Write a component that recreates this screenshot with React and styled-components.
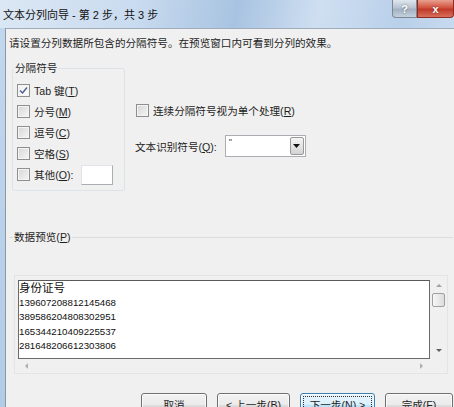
import React from 'react';
import styled, { createGlobalStyle } from 'styled-components';

const GlobalStyle = createGlobalStyle`
  html, body { margin: 0; padding: 0; background: #f0f0f0; overflow: hidden; }
  body {
    font-family: "Liberation Sans", "Noto Sans CJK SC", sans-serif;
    font-size: 10.6px;
    color: #1e1e1e;
  }
`;

const Window = styled.div`
  width: 454px;
  height: 407px;
  overflow: hidden;
  display: flex;
  flex-direction: column;
  background: linear-gradient(180deg, #c3d8ee 0%, #b2cbe7 100%);
`;

const TitleBar = styled.div`
  height: 28px;
  flex: none;
  display: flex;
  align-items: flex-start;
  background: linear-gradient(100deg, #dbe7f4 0%, #c9dbef 30%, #a8c3e1 52%, #cfdff1 70%, #b9d0ea 88%, #c7daef 100%);
`;

const Title = styled.div`
  flex: 1;
  padding: 7px 0 0 3px;
  line-height: 16px;
  font-size: 11px;
  color: #111;
`;

const CaptionButton = styled.div`
  height: 18px;
  width: ${p => p.$w}px;
  display: flex;
  align-items: center;
  justify-content: center;
  color: #fff;
  font-weight: bold;
  font-size: 11px;
  box-sizing: border-box;
  border: 1px solid ${p => (p.$close ? '#8d2a22' : '#7d8793')};
  border-top: none;
  border-radius: ${p => (p.$close ? '0 0 4px 0' : '0 0 0 4px')};
  background: ${p =>
    p.$close
      ? 'linear-gradient(180deg, #e8a090 0%, #d2533f 45%, #c0392b 55%, #d8705a 100%)'
      : 'linear-gradient(180deg, #dfe6ee 0%, #b8c4d2 45%, #a3b1c1 55%, #c4d1de 100%)'};
  text-shadow: 0 0 2px rgba(0, 0, 0, 0.5);
`;

const Body = styled.div`
  flex: 1;
  margin-left: 5px;
  border-top: 1px solid #9eacbc;
  border-left: 1px solid #8c98a6;
  background: #f0f0f0;
  padding: 0 1px 0 3px;
  display: flex;
  flex-direction: column;
`;

const Instruction = styled.div`
  margin-top: 6px;
  line-height: 16px;
  white-space: nowrap;
`;

const OptionsRow = styled.div`
  margin-top: 9px;
  display: flex;
  align-items: flex-start;
`;

const GroupBox = styled.fieldset`
  margin: 0 0 0 3px;
  width: 113px;
  box-sizing: border-box;
  border: 1px solid #dde2e7;
  border-radius: 3px;
  padding: 4px 0 5px 1px;
  min-inline-size: 0;
`;

const Legend = styled.legend`
  padding: 0 1px;
  line-height: 16px;
  color: #1e1e1e;
`;

const CheckRow = styled.div`
  height: 21px;
  display: flex;
  align-items: center;
  gap: 4px;
  padding-left: 3px;
  white-space: nowrap;
`;

const Box = styled.span`
  width: 13px;
  height: 13px;
  flex: none;
  box-sizing: border-box;
  border: 1px solid #8e8f8f;
  display: flex;
  align-items: center;
  justify-content: center;
  background: ${p =>
    p.$checked
      ? 'linear-gradient(135deg, #f0f0f0, #fdfdfd)'
      : 'linear-gradient(135deg, #d6d6d6 0%, #e9e9e9 60%, #f6f6f6 100%)'};
  box-shadow: inset 0 0 0 1px #f4f4f4;
`;

const OtherInput = styled.span`
  width: 32px;
  height: 20px;
  margin-left: 4px;
  box-sizing: border-box;
  border: 1px solid #abadb3;
  border-top-color: #e2e3ea;
  border-left-color: #e2e3ea;
  background: #fff;
`;

const RightColumn = styled.div`
  margin-left: 8px;
  padding-top: 40px;
  display: flex;
  flex-direction: column;
`;

const FieldRow = styled.div`
  margin-top: 14px;
  height: 22px;
  display: flex;
  align-items: center;
  padding-left: 2px;
  white-space: nowrap;
`;

const Select = styled.div`
  margin-left: 8px;
  width: 81px;
  height: 22px;
  box-sizing: border-box;
  border: 1px solid #abadb3;
  background: #fff;
  display: flex;
  align-items: stretch;
`;

const SelectValue = styled.span`
  flex: 1;
  padding: 1px 0 0 3px;
  font-size: 9px;
  line-height: 10px;
  color: #444;
`;

const SelectButton = styled.span`
  width: 14px;
  margin: 1px;
  box-sizing: border-box;
  border: 1px solid #9a9a9a;
  border-radius: 2px;
  background: linear-gradient(180deg, #f4f4f4 0%, #e4e4e4 50%, #d2d2d2 100%);
  display: flex;
  align-items: center;
  justify-content: center;
`;

const PreviewGroup = styled.fieldset`
  margin: 38px 0 0 0;
  padding: 0 0 0 4px;
  border: none;
  border-top: 1px solid #dcdcdc;
  min-inline-size: 0;
`;

const Frame = styled.div`
  margin: 30px 0 0 1px;
  width: 434px;
  box-sizing: border-box;
  border: 1px solid #e4e4e4;
  padding: 4px 0 0 3px;
`;

const PreviewGrid = styled.div`
  display: grid;
  grid-template-columns: 412px 17px;
  grid-template-rows: 79px 14px;
`;

const PreviewBox = styled.div`
  box-sizing: border-box;
  border: 1px solid #6a6a6a;
  border-top-color: #5a5a5a;
  background: #fff;
  overflow: hidden;
`;

const PreviewLine = styled.div`
  line-height: 14.5px;
  height: 14.5px;
  white-space: nowrap;
  font-size: ${p => (p.$head ? '11.5px' : '9.7px')};
  color: #111;
`;

const VScroll = styled.div`
  display: flex;
  flex-direction: column;
  align-items: center;
  background: #f0f0f0;
`;

const Thumb = styled.div`
  width: 13px;
  height: 14px;
  margin-top: 6px;
  box-sizing: border-box;
  border: 1px solid #a0a0a0;
  border-radius: 2px;
  background: linear-gradient(90deg, #f6f6f6, #dcdcdc);
`;

const HScroll = styled.div`
  display: flex;
  align-items: center;
  justify-content: space-between;
  padding: 0 7px;
`;

const Arrow = styled.span`
  width: 0;
  height: 0;
  border: 3px solid transparent;
  ${p => p.$dir === 'up' && 'border-bottom: 3px solid #a0a0a0; border-top: none;'}
  ${p => p.$dir === 'down' && 'border-top: 3px solid #606060; border-bottom: none;'}
  ${p => p.$dir === 'left' && 'border-right: 3px solid #b0b0b0; border-left: none;'}
  ${p => p.$dir === 'right' && 'border-left: 3px solid #b0b0b0; border-right: none;'}
`;

const Spacer = styled.span`
  flex: ${p => (p.$h ? 'none' : 1)};
  height: ${p => (p.$h ? `${p.$h}px` : 'auto')};
`;

const ButtonRow = styled.div`
  margin-top: 19px;
  display: flex;
  justify-content: flex-end;
  gap: 10px;
`;

const Button = styled.div`
  width: ${p => p.$w}px;
  height: 23px;
  flex: none;
  box-sizing: border-box;
  border: 1px solid ${p => (p.$default ? '#3c7fb1' : '#707070')};
  border-radius: 3px;
  background: ${p =>
    p.$default
      ? 'linear-gradient(180deg, #eaf6fd 0%, #d9f0fc 50%, #bee6fd 51%, #a7d9f5 100%)'
      : 'linear-gradient(180deg, #f2f2f2 0%, #ebebeb 50%, #dddddd 51%, #cfcfcf 100%)'};
  box-shadow: inset 0 0 0 1px rgba(255, 255, 255, 0.7);
  display: flex;
  align-items: center;
  justify-content: center;
  padding: 2px;
  white-space: nowrap;
`;

const Focus = styled.span`
  flex: 1;
  align-self: stretch;
  display: flex;
  align-items: center;
  justify-content: center;
  border: 1px dotted #333;
`;

const U = styled.span`
  text-decoration: underline;
`;

const Check = () => (
  <svg width="9" height="9" viewBox="0 0 9 9">
    <path d="M1 4.5 L3.5 7 L8 1.5" fill="none" stroke="#4a5f8f" strokeWidth="1.4" />
  </svg>
);

const CheckBox = ({ checked, children }) => (
  <CheckRow>
    <Box $checked={checked}>{checked && <Check />}</Box>
    <span>{children}</span>
  </CheckRow>
);

const rows = [
  '139607208812145468',
  '389586204808302951',
  '165344210409225537',
  '281648206612303806',
];

export default function App() {
  return (
    <>
      <GlobalStyle />
      <Window>
        <TitleBar>
          <Title>文本分列向导 - 第 2 步，共 3 步</Title>
          <CaptionButton $w={25}>?</CaptionButton>
          <CaptionButton $w={37} $close>x</CaptionButton>
        </TitleBar>
        <Body>
          <Instruction>请设置分列数据所包含的分隔符号。在预览窗口内可看到分列的效果。</Instruction>
          <OptionsRow>
            <GroupBox>
              <Legend>分隔符号</Legend>
              <CheckBox checked>Tab 键(<U>T</U>)</CheckBox>
              <CheckBox>分号(<U>M</U>)</CheckBox>
              <CheckBox>逗号(<U>C</U>)</CheckBox>
              <CheckBox>空格(<U>S</U>)</CheckBox>
              <CheckRow>
                <Box />
                <span>其他(<U>O</U>):</span>
                <OtherInput />
              </CheckRow>
            </GroupBox>
            <RightColumn>
              <CheckBox>连续分隔符号视为单个处理(<U>R</U>)</CheckBox>
              <FieldRow>
                <span>文本识别符号(<U>Q</U>):</span>
                <Select>
                  <SelectValue>"</SelectValue>
                  <SelectButton>
                    <svg width="7" height="4" viewBox="0 0 7 4">
                      <path d="M0 0 L7 0 L3.5 4 Z" fill="#111" />
                    </svg>
                  </SelectButton>
                </Select>
              </FieldRow>
            </RightColumn>
          </OptionsRow>
          <PreviewGroup>
            <Legend>数据预览(<U>P</U>)</Legend>
            <Frame>
              <PreviewGrid>
                <PreviewBox>
                  <PreviewLine $head>身份证号</PreviewLine>
                  {rows.map(r => (
                    <PreviewLine key={r}>{r}</PreviewLine>
                  ))}
                </PreviewBox>
                <VScroll>
                  <Spacer $h={4} />
                  <Arrow $dir="up" />
                  <Thumb />
                  <Spacer />
                  <Arrow $dir="down" />
                  <Spacer $h={7} />
                </VScroll>
                <HScroll>
                  <Arrow $dir="left" />
                  <Arrow $dir="right" />
                </HScroll>
              </PreviewGrid>
            </Frame>
          </PreviewGroup>
          <ButtonRow>
            <Button $w={66}>取消</Button>
            <Button $w={73}>&lt; 上一步(<U>B</U>)</Button>
            <Button $w={75} $default>
              <Focus>下一步(<U>N</U>) &gt;</Focus>
            </Button>
            <Button $w={68}>完成(<U>F</U>)</Button>
          </ButtonRow>
        </Body>
      </Window>
    </>
  );
}
